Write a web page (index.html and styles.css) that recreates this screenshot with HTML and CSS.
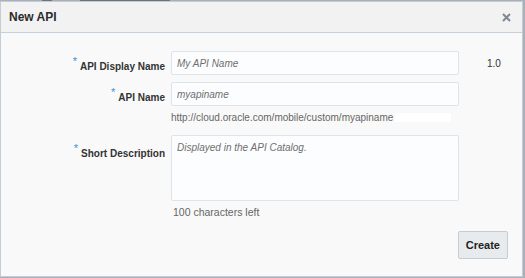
FILE: index.html
```html
<!DOCTYPE html>
<html lang="en">
<head>
    <meta charset="UTF-8">
    <meta name="viewport" content="width=device-width, initial-scale=1.0">
    <title>New API</title>
    <link rel="stylesheet" href="styles.css">
</head>
<body>
    <div class="backdrop">
        <span class="backdrop-mark mark-a"></span>
        <span class="backdrop-mark mark-b"></span>
    </div>
    <div class="dialog">
        <div class="dialog-header">
            <span class="dialog-title">New API</span>
            <svg class="dialog-close" width="9" height="9" viewBox="0 0 9 9">
                <path d="M1 1 L8 8 M8 1 L1 8" stroke="#7f8894" stroke-width="2"/>
            </svg>
        </div>
        <form class="dialog-body" id="newApiForm">
            <div class="form-row name-row">
                <label class="form-label" for="displayName"><span class="req">*</span>API Display Name</label>
                <input class="form-input" type="text" id="displayName" placeholder="My API Name">
                <span class="version">1.0</span>
            </div>
            <div class="form-row api-row">
                <label class="form-label" for="apiName"><span class="req">*</span>API Name</label>
                <input class="form-input" type="text" id="apiName" placeholder="myapiname">
            </div>
            <div class="form-row hint-row">
                <span class="form-label"></span>
                <span class="hint">http://cloud.oracle.com/mobile/custom/myapiname<span class="hint-mask"></span></span>
            </div>
            <div class="form-row top-row">
                <label class="form-label" for="shortDesc"><span class="req">*</span>Short Description</label>
                <textarea class="form-textarea" id="shortDesc" placeholder="Displayed in the API Catalog."></textarea>
            </div>
            <div class="form-row count-row">
                <span class="form-label"></span>
                <span class="count">100 characters left</span>
            </div>
            <div class="actions">
                <button type="submit" class="btn">Create</button>
            </div>
        </form>
    </div>
</body>
</html>
```

FILE: styles.css
```css
body {
    margin: 0;
    font-family: "Liberation Sans", Arial, sans-serif;
    background-color: #a9b0b8;
    width: 525px;
    height: 278px;
    overflow: hidden;
}
.backdrop {
    height: 1px;
    display: flex;
}
.backdrop-mark {
    height: 1px;
    background-color: #6d737a;
}
.mark-a {
    width: 10px;
    margin-left: 42px;
}
.mark-b {
    width: 90px;
    margin-left: 28px;
}
.dialog {
    width: 523px;
    height: 276px;
    box-sizing: border-box;
    border: 1px solid #c3cdd8;
    background-color: #f9f9f9;
    display: flex;
    flex-direction: column;
}
.dialog-header {
    height: 30px;
    flex: none;
    background-color: #f2f2f2;
    border-bottom: 1px solid #c6d0da;
    display: flex;
    align-items: center;
    justify-content: space-between;
    padding: 0 11px 0 8px;
}
.dialog-title {
    font-size: 12px;
    font-weight: bold;
    color: #2b2b2b;
}
.dialog-close {
    display: block;
}
.dialog-body {
    margin: 0;
    padding-top: 18px;
    display: flex;
    flex-direction: column;
}
.form-row {
    display: flex;
    align-items: center;
}
.form-label {
    width: 164px;
    flex: none;
    margin-right: 6px;
    text-align: right;
    font-size: 10px;
    font-weight: bold;
    color: #333;
}
.req {
    color: #3d8fd8;
    font-size: 11px;
    font-weight: normal;
    vertical-align: 5px;
    margin-right: 3px;
}
.form-input,
.form-textarea {
    width: 288px;
    box-sizing: border-box;
    border: 1px solid #dfe4e8;
    border-radius: 2px;
    background-color: #fcfdfe;
    font-family: "Liberation Sans", Arial, sans-serif;
    font-size: 10px;
    font-style: italic;
    padding: 0 5px;
    margin: 0;
}
.form-input {
    height: 24px;
}
.form-textarea {
    height: 66px;
    padding-top: 6px;
    resize: none;
}
.form-input::placeholder,
.form-textarea::placeholder {
    color: #6f6f6f;
}
.version {
    margin-left: 28px;
    font-size: 10px;
    color: #333;
}
.name-row {
    margin-bottom: 7px;
}
.api-row {
    margin-bottom: 5px;
}
.hint-row {
    height: 12px;
    margin-bottom: 12px;
}
.top-row {
    align-items: flex-start;
}
.top-row .form-label {
    padding-top: 7px;
}
.hint {
    font-size: 10px;
    color: #666;
    display: flex;
    align-items: center;
}
.hint-mask {
    display: inline-block;
    width: 56px;
    height: 9px;
    background-color: #fff;
    margin-left: 2px;
}
.count-row {
    height: 13px;
    margin-top: 4px;
}
.count {
    font-size: 10.5px;
    color: #666;
    margin-left: 2px;
}
.actions {
    display: flex;
    justify-content: flex-end;
    padding-right: 14px;
    margin-top: 13px;
}
.btn {
    height: 28px;
    padding: 0 7px;
    border: 1px solid #c4ccd4;
    border-radius: 2px;
    background-color: #e8ebee;
    font-family: "Liberation Sans", Arial, sans-serif;
    font-size: 11px;
    font-weight: bold;
    color: #222;
    cursor: pointer;
}
```
